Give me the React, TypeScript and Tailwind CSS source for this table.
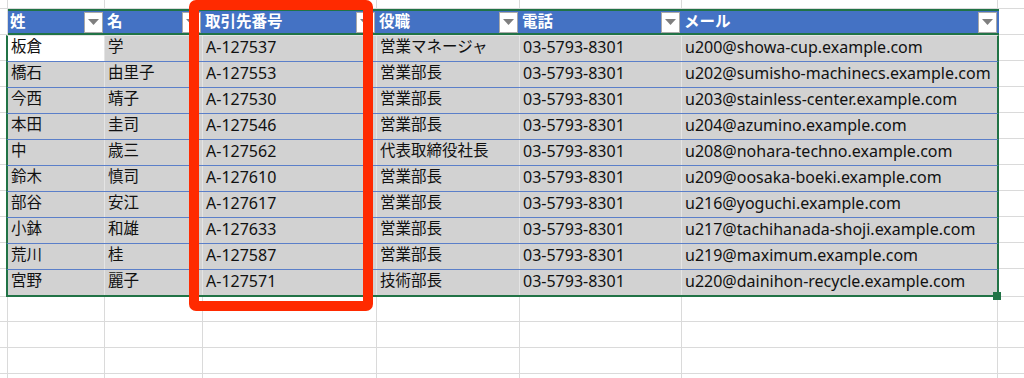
import React from 'react';

type Row = [string, string, string, string, string, string];

const rows: Row[] = [
  ['板倉', '学', 'A-127537', '営業マネージャ', '03-5793-8301', 'u200@showa-cup.example.com'],
  ['橋石', '由里子', 'A-127553', '営業部長', '03-5793-8301', 'u202@sumisho-machinecs.example.com'],
  ['今西', '靖子', 'A-127530', '営業部長', '03-5793-8301', 'u203@stainless-center.example.com'],
  ['本田', '圭司', 'A-127546', '営業部長', '03-5793-8301', 'u204@azumino.example.com'],
  ['中', '歳三', 'A-127562', '代表取締役社長', '03-5793-8301', 'u208@nohara-techno.example.com'],
  ['鈴木', '慎司', 'A-127610', '営業部長', '03-5793-8301', 'u209@oosaka-boeki.example.com'],
  ['部谷', '安江', 'A-127617', '営業部長', '03-5793-8301', 'u216@yoguchi.example.com'],
  ['小鉢', '和雄', 'A-127633', '営業部長', '03-5793-8301', 'u217@tachihanada-shoji.example.com'],
  ['荒川', '桂', 'A-127587', '営業部長', '03-5793-8301', 'u219@maximum.example.com'],
  ['宮野', '麗子', 'A-127571', '技術部長', '03-5793-8301', 'u220@dainihon-recycle.example.com'],
];

const headers = ['姓', '名', '取引先番号', '役職', '電話', 'メール'];
const headerWidths = ['w-[97px]', 'w-[98px]', 'w-[174px]', 'w-[143px]', 'w-[162px]', 'w-[317px]'];
const cellWidths = ['w-[97px]', 'w-[98px]', 'w-[174px]', 'w-[143px]', 'w-[162px]', 'w-[315px]'];
// columns holding latin text get a slightly bigger size, like the sheet's font
const latinCol = [false, false, true, false, true, true];

function FilterButton() {
  return (
    <span className="ml-auto mr-[2px] flex h-[21px] w-[19px] shrink-0 items-center justify-center border border-[#a9a9a9] bg-white">
      <svg width="11" height="6" viewBox="0 0 11 6">
        <path d="M0 0h11L5.5 6z" fill="#7f7f7f" />
      </svg>
    </span>
  );
}

// a plain sheet row: only gridlines
function EmptyRow({ h }: { h: string }) {
  return (
    <div className={`flex ${h}`}>
      <div className="w-[8px] border-r border-b border-[#dadada]" />
      <div className="w-[97px] border-r border-b border-[#dadada]" />
      <div className="w-[98px] border-r border-b border-[#dadada]" />
      <div className="w-[174px] border-r border-b border-[#dadada]" />
      <div className="w-[143px] border-r border-b border-[#dadada]" />
      <div className="w-[162px] border-r border-b border-[#dadada]" />
      <div className="w-[316px] border-r border-b border-[#dadada]" />
      <div className="flex-1 border-b border-[#dadada]" />
    </div>
  );
}

function DataRow({ row, index }: { row: Row; index: number }) {
  const last = index === rows.length - 1;
  return (
    <div className={`flex ${last ? 'h-[28px]' : 'h-[26px]'}`}>
      <div className="w-[6px] border-b border-[#dadada]" />
      <div
        className={`flex border-t border-l-2 border-r-2 border-l-[#217346] border-r-[#217346] ${
          index === 0 ? 'border-t-[#e6e6e6]' : 'border-t-[#5b7fc9]'
        } ${last ? 'border-b-2 border-b-[#217346]' : ''}`}
      >
        {row.map((v, c) => (
          <div
            key={c}
            className={`flex items-center overflow-hidden whitespace-nowrap pl-[3px] pb-[3px] leading-none text-[#111] ${cellWidths[c]} ${
              c < 5 ? 'border-r border-[#e4e4e4]' : ''
            } ${latinCol[c] ? 'text-[16px]' : 'text-[15.5px]'} ${
              index === 0 && c === 0 ? 'bg-white' : 'bg-[#d2d2d2]'
            }`}
          >
            {v}
          </div>
        ))}
      </div>
      <div className="flex-1 border-b border-[#dadada]" />
    </div>
  );
}

export default function App() {
  return (
    <div className="relative h-[378px] w-[1024px] overflow-hidden bg-white font-['Noto_Sans','Noto_Sans_CJK_JP',sans-serif]">
      <EmptyRow h="h-[9px]" />

      {/* table header */}
      <div className="flex h-[26px]">
        <div className="w-[8px] border-r border-b border-[#dadada]" />
        <div className="flex w-[991px] border-y-2 border-[#217346] bg-[#4472c4]">
          {headers.map((h, i) => (
            <div key={h} className={`flex items-center pl-[2px] ${headerWidths[i]}`}>
              <span className="text-[15.5px] font-bold leading-none text-white">{h}</span>
              <FilterButton />
            </div>
          ))}
        </div>
        <div className="flex-1 border-b border-[#dadada]" />
      </div>

      {rows.map((r, i) => (
        <DataRow key={r[2]} row={r} index={i} />
      ))}

      <EmptyRow h="h-[25px]" />
      <EmptyRow h="h-[26px]" />
      <EmptyRow h="h-[26px]" />
      <EmptyRow h="h-[26px]" />

      {/* fill handle */}
      <div className="absolute left-[993px] top-[292px] h-[8px] w-[8px] bg-[#217346]" />

      {/* red highlight around the 取引先番号 column */}
      <div className="pointer-events-none absolute left-[189px] top-0 h-[311px] w-[184px] rounded-[7px] border-[10px] border-[#ff2a00]" />
    </div>
  );
}
